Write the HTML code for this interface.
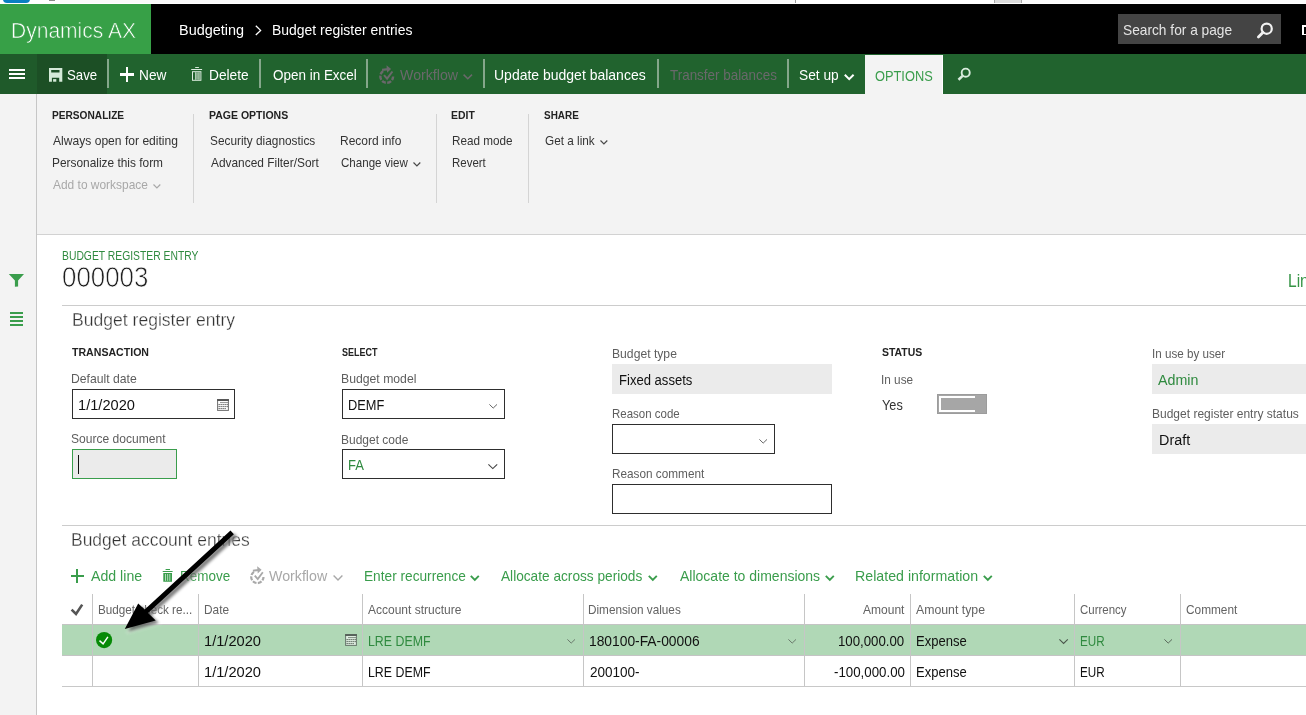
<!DOCTYPE html>
<html><head><meta charset="utf-8"><title>Budget register entries</title>
<style>
html,body{margin:0;padding:0;}
body{width:1306px;height:715px;overflow:hidden;position:relative;background:#fff;font-family:"Liberation Sans", sans-serif;}
.t{position:absolute;white-space:nowrap;line-height:1;transform-origin:0 0;font-family:"Liberation Sans", sans-serif;}
.b{position:absolute;box-sizing:border-box;}
svg{position:absolute;overflow:visible;}
#root{position:absolute;left:0;top:0;width:1306px;height:715px;overflow:hidden;background:#fff;}
</style></head><body>
<div id="root">
<!-- top browser strip -->
<div class="b" style="left:0;top:0;width:1306px;height:4px;background:#fff"></div>
<div class="b" style="left:60px;top:0;width:735px;height:3px;background:#fafafa"></div>
<div class="b" style="left:1022px;top:0;width:284px;height:3px;background:#fbfbfb"></div>
<div class="b" style="left:795px;top:0;width:1px;height:3px;background:#9a9a9a"></div>
<div class="b" style="left:994px;top:0;width:28px;height:3px;background:#dcdcdc;border-left:1px solid #a8a8a8;border-right:1px solid #a8a8a8"></div>
<div class="b" style="left:3.4px;top:-11px;width:27px;height:14px;background:#0a7fc2;border-radius:4px"></div>
<div class="b" style="left:48.5px;top:0;width:6.7px;height:0.9px;background:#8c8c8c"></div>
<!-- header -->
<div class="b" style="left:0;top:4px;width:1306px;height:50px;background:#000"></div>
<div class="b" style="left:0;top:4px;width:151px;height:50px;background:#37a047"></div>
<svg style="left:255px;top:25px" width="7" height="11" viewBox="0 0 7 11"><path d="M0.8 0.8 L5.6 5.4 L0.8 10" fill="none" stroke="#fff" stroke-width="1.3"/></svg>
<div class="b" style="left:1118px;top:14px;width:163px;height:30px;background:#444444"></div>
<svg style="left:1257px;top:22px" width="17" height="17" viewBox="0 0 17 17"><circle cx="9.7" cy="6.7" r="5.1" fill="none" stroke="#f2f2f2" stroke-width="2.2"/><path d="M5.9 10.5 L1.4 15" stroke="#f2f2f2" stroke-width="2.8" stroke-linecap="round"/></svg>
<div class="b" style="left:1302px;top:25.4px;width:1.6px;height:9.6px;background:#fff"></div>
<div class="b" style="left:1302px;top:25.4px;width:4px;height:1.3px;background:#fff"></div>
<div class="b" style="left:1302px;top:33.7px;width:4px;height:1.3px;background:#fff"></div>
<!-- toolbar -->
<div class="b" style="left:0;top:54px;width:1306px;height:40px;background:#21632e"></div>
<div class="b" style="left:0;top:54px;width:37px;height:40px;background:#1f5a2a"></div>
<div class="b" style="left:37px;top:54px;width:70px;height:40px;background:#1c4f25"></div>
<!-- hamburger -->
<div class="b" style="left:9px;top:69px;width:16px;height:1.9px;background:#fff"></div>
<div class="b" style="left:9px;top:73.1px;width:16px;height:1.9px;background:#fff"></div>
<div class="b" style="left:9px;top:77.2px;width:16px;height:1.9px;background:#fff"></div>
<!-- save icon -->
<svg style="left:48.8px;top:68.1px" width="14" height="14" viewBox="0 0 14 14"><path d="M0 0 H13.3 V13.7 H10.2 V9.8 H2.9 V13.7 H0 Z M2.2 2.1 V4.6 H10.5 V2.1 Z" fill="#d5ead9" fill-rule="evenodd"/><rect x="4.1" y="11.1" width="3.2" height="2.6" fill="#d5ead9"/></svg>
<!-- toolbar separators -->
<div class="b" style="left:107.3px;top:59px;width:2px;height:29.4px;background:#85a78b"></div>
<div class="b" style="left:259.4px;top:59px;width:2px;height:29.4px;background:#85a78b"></div>
<div class="b" style="left:366.4px;top:59px;width:2px;height:29.4px;background:#85a78b"></div>
<div class="b" style="left:482.6px;top:59px;width:2px;height:29.4px;background:#85a78b"></div>
<div class="b" style="left:656.7px;top:59px;width:2px;height:29.4px;background:#85a78b"></div>
<div class="b" style="left:787.0px;top:59px;width:2px;height:29.4px;background:#85a78b"></div>
<!-- plus (New) -->
<div class="b" style="left:120px;top:73.4px;width:14.4px;height:2.6px;background:#fff"></div>
<div class="b" style="left:125.9px;top:67.4px;width:2.6px;height:14.6px;background:#fff"></div>
<!-- trash (Delete) -->
<svg style="left:191px;top:66px" width="12" height="16" viewBox="0 0 12 16"><rect x="4" y="1" width="4.1" height="1" rx="0.4" fill="#d6e8d9"/><rect x="0.2" y="3" width="10.9" height="1" fill="#dcebdf"/><rect x="1.5" y="5.7" width="8.4" height="8.6" fill="none" stroke="#dcebdf" stroke-width="1"/><rect x="4" y="6.2" width="4.6" height="7.6" fill="#86ae8d"/><path d="M4.5 6.2 V13.8 M8.1 6.2 V13.8" stroke="#b4d0b9" stroke-width="0.8"/></svg>
<!-- workflow icon (toolbar) -->
<svg style="left:378px;top:65px" width="17" height="20" viewBox="0 0 17 20"><g fill="none" stroke="#6a686b"><path d="M5.12 6.09 A6.4 6.4 0 1 0 15.1 11.4" stroke-width="2.4" stroke-dasharray="4.2 1.35"/><path d="M6 10.1 L9.1 13.7 L14.4 6.5" stroke-width="2"/><path d="M4.1 4.9 L10.5 4.1" stroke-width="2.2"/></g><path d="M8.5 0.2 L13.1 4 L9.1 7.8 Z" fill="#6a686b"/></svg>
<svg style="left:463px;top:73.5px" width="10" height="6" viewBox="0 0 10 6"><path d="M0.6 0.6 L4.8 4.8 L9 0.6" fill="none" stroke="#6a686b" stroke-width="1.5"/></svg>
<svg style="left:843.5px;top:73.5px" width="11" height="7" viewBox="0 0 11 7"><path d="M0.8 0.8 L5.2 5.2 L9.6 0.8" fill="none" stroke="#fff" stroke-width="2"/></svg>
<!-- options tab -->
<div class="b" style="left:865px;top:55px;width:78px;height:40px;background:#f3f3f3"></div>
<div class="b" style="left:942px;top:55px;width:1.2px;height:39px;background:#fff"></div>
<svg style="left:957px;top:67px" width="15" height="15" viewBox="0 0 15 15"><circle cx="8.7" cy="5.7" r="4.05" fill="none" stroke="#d8ebdc" stroke-width="1.9"/><path d="M5.6 8.9 L1.5 12.8" stroke="#d8ebdc" stroke-width="2.6"/></svg>
<!-- options pane + sidebar -->
<div class="b" style="left:0;top:94px;width:1306px;height:140px;background:#f3f3f3"></div>
<div class="b" style="left:0;top:94px;width:37px;height:621px;background:#f3f3f3"></div>
<div class="b" style="left:36px;top:94px;width:1px;height:621px;background:#c6c6c6"></div>
<div class="b" style="left:37px;top:234px;width:1269px;height:1px;background:#d2d2d2"></div>
<div class="b" style="left:193px;top:114px;width:1.4px;height:89px;background:#d4d4d4"></div>
<div class="b" style="left:435.5px;top:114px;width:1.4px;height:89px;background:#d4d4d4"></div>
<div class="b" style="left:527.8px;top:114px;width:1.4px;height:89px;background:#d4d4d4"></div>
<svg style="left:153.3px;top:183.5px" width="8" height="5" viewBox="0 0 8 5"><path d="M0.5 0.5 L3.9 4 L7.3 0.5" fill="none" stroke="#a8a8a8" stroke-width="1.15"/></svg>
<svg style="left:413.3px;top:161.5px" width="8" height="5" viewBox="0 0 8 5"><path d="M0.5 0.5 L3.9 4 L7.3 0.5" fill="none" stroke="#484848" stroke-width="1.15"/></svg>
<svg style="left:599.8px;top:139.7px" width="8" height="5" viewBox="0 0 8 5"><path d="M0.5 0.5 L3.9 4 L7.3 0.5" fill="none" stroke="#484848" stroke-width="1.15"/></svg>
<!-- sidebar icons -->
<svg style="left:0px;top:0px" width="40" height="340" viewBox="0 0 40 340"><path d="M8.8 274 H24 L18.1 280.4 V286.4 L14.9 286.8 V280.4 Z" fill="#3a9d4c"/></svg>
<div class="b" style="left:10px;top:312.3px;width:13px;height:1.9px;background:#3a9d4c"></div>
<div class="b" style="left:10px;top:316.3px;width:13px;height:1.9px;background:#3a9d4c"></div>
<div class="b" style="left:10px;top:320.2px;width:13px;height:1.9px;background:#3a9d4c"></div>
<div class="b" style="left:10px;top:324.1px;width:13px;height:1.9px;background:#3a9d4c"></div>
<!-- rules -->
<div class="b" style="left:62px;top:305px;width:1244px;height:1px;background:#cccccc"></div>
<div class="b" style="left:62px;top:524.5px;width:1244px;height:1px;background:#cccccc"></div>
<!-- form inputs -->
<div class="b" style="left:72px;top:389px;width:163px;height:30px;border:1px solid #2e2e2e;background:#fff"></div>
<svg style="left:217px;top:399px" width="13" height="13" viewBox="0 0 13 13"><rect x="0.6" y="0.6" width="10.8" height="10.8" fill="#fff" stroke="#6e6e6e" stroke-width="1"/><rect x="0.1" y="0.1" width="11.8" height="1.9" fill="#555"/><path d="M3.2 3.6 H11 M1.4 5.6 H11 M1.4 7.6 H11 M1.4 9.6 H9" stroke="#666" stroke-width="0.9" stroke-dasharray="1.6 0.4"/></svg>
<div class="b" style="left:72px;top:449px;width:105px;height:30px;border:1px solid #3a9d4c;background:#ebebeb"></div>
<div class="b" style="left:78px;top:455px;width:1px;height:19px;background:#111"></div>
<div class="b" style="left:342px;top:389px;width:163px;height:30px;border:1px solid #2e2e2e;background:#fff"></div>
<svg style="left:488.6px;top:404px" width="9" height="5" viewBox="0 0 9 5"><path d="M0.4 0.4 L4.2 4.1 L8 0.4" fill="none" stroke="#666" stroke-width="1"/></svg>
<div class="b" style="left:342px;top:449px;width:163px;height:30px;border:1px solid #2e2e2e;background:#fff"></div>
<svg style="left:488px;top:464.4px" width="10" height="6" viewBox="0 0 10 6"><path d="M0.4 0.4 L4.8 4.6 L9.2 0.4" fill="none" stroke="#444" stroke-width="1.1"/></svg>
<div class="b" style="left:612px;top:364px;width:220px;height:29.6px;background:#ebebeb"></div>
<div class="b" style="left:612px;top:424px;width:163px;height:30px;border:1px solid #2e2e2e;background:#fff"></div>
<svg style="left:759px;top:439px" width="9" height="5" viewBox="0 0 9 5"><path d="M0.4 0.4 L4.2 4.1 L8 0.4" fill="none" stroke="#666" stroke-width="1"/></svg>
<div class="b" style="left:612px;top:484px;width:220px;height:30px;border:1px solid #2e2e2e;background:#fff"></div>
<!-- toggle -->
<div class="b" style="left:937px;top:394px;width:50px;height:20px;background:#a6a6a6;border:1px solid #9c9c9c"></div>
<div class="b" style="left:939px;top:396px;width:36px;height:16px;border:2px solid #fff;border-right:none"></div>
<div class="b" style="left:1152px;top:364px;width:154px;height:29.6px;background:#ebebeb"></div>
<div class="b" style="left:1152px;top:424.2px;width:154px;height:29.6px;background:#ebebeb"></div>
<!-- action bar icons -->
<div class="b" style="left:70.5px;top:575px;width:13.4px;height:2px;background:#3a9d4c"></div>
<div class="b" style="left:76.2px;top:569.3px;width:2px;height:13.4px;background:#3a9d4c"></div>
<svg style="left:163.2px;top:569px" width="10" height="14" viewBox="0 0 10 14"><path d="M2.6 0 H7 V1 H2.6 Z M-0.3 1.9 H9.6 V3.1 H-0.3 Z M0.3 3.9 H9 V12.8 H0.3 Z" fill="#3a9d4c"/><path d="M2.5 5 V11.8 M4.65 5 V11.8 M6.8 5 V11.8" stroke="#bfe3c5" stroke-width="0.9"/></svg>
<svg style="left:249px;top:566.4px" width="17" height="20" viewBox="0 0 17 20"><g transform="scale(0.96)"><g fill="none" stroke="#a9a9a9"><path d="M5.12 6.09 A6.4 6.4 0 1 0 15.1 11.4" stroke-width="2.3" stroke-dasharray="4.2 1.35"/><path d="M6 10.1 L9.1 13.7 L14.4 6.5" stroke-width="1.9"/><path d="M4.1 4.9 L10.5 4.1" stroke-width="2.1"/></g><path d="M8.5 0.2 L13.1 4 L9.1 7.8 Z" fill="#a9a9a9"/></g></svg>
<svg style="left:332.6px;top:574.5px" width="11" height="6" viewBox="0 0 11 6"><path d="M0.6 0.6 L5 5 L9.4 0.6" fill="none" stroke="#a8a8a8" stroke-width="1.4"/></svg>
<svg style="left:470.2px;top:574.6px" width="11" height="7" viewBox="0 0 11 7"><path d="M0.8 0.8 L4.8 4.8 L8.8 0.8" fill="none" stroke="#3a9d4c" stroke-width="1.9"/></svg>
<svg style="left:648.2px;top:574.6px" width="11" height="7" viewBox="0 0 11 7"><path d="M0.8 0.8 L4.8 4.8 L8.8 0.8" fill="none" stroke="#3a9d4c" stroke-width="1.9"/></svg>
<svg style="left:825px;top:574.6px" width="11" height="7" viewBox="0 0 11 7"><path d="M0.8 0.8 L4.8 4.8 L8.8 0.8" fill="none" stroke="#3a9d4c" stroke-width="1.9"/></svg>
<svg style="left:983px;top:574.6px" width="11" height="7" viewBox="0 0 11 7"><path d="M0.8 0.8 L4.8 4.8 L8.8 0.8" fill="none" stroke="#3a9d4c" stroke-width="1.9"/></svg>
<!-- grid -->
<div class="b" style="left:62px;top:624px;width:1244px;height:32px;background:#b0d8b6;border-top:1px solid #c4c4c4;border-bottom:1px solid #c4c4c4"></div>
<div class="b" style="left:62px;top:686px;width:1244px;height:1px;background:#c8c8c8"></div>
<div class="b" style="left:92px;top:594px;width:1.2px;height:92px;background:#c6c6c6"></div>
<div class="b" style="left:198px;top:594px;width:1.2px;height:92px;background:#c6c6c6"></div>
<div class="b" style="left:362px;top:594px;width:1.2px;height:92px;background:#c6c6c6"></div>
<div class="b" style="left:583px;top:594px;width:1.2px;height:92px;background:#c6c6c6"></div>
<div class="b" style="left:804px;top:594px;width:1.2px;height:92px;background:#c6c6c6"></div>
<div class="b" style="left:910px;top:594px;width:1.2px;height:92px;background:#c6c6c6"></div>
<div class="b" style="left:1074px;top:594px;width:1.2px;height:92px;background:#c6c6c6"></div>
<div class="b" style="left:1180px;top:594px;width:1.2px;height:92px;background:#c6c6c6"></div>
<svg style="left:70px;top:603px" width="14" height="13" viewBox="0 0 14 13"><path d="M1.6 6.6 L6 11 L12.2 1.6" fill="none" stroke="#555" stroke-width="2.6"/></svg>
<svg style="left:96px;top:631.8px" width="17" height="17" viewBox="0 0 17 17"><circle cx="8.1" cy="8.1" r="8.1" fill="#078a07"/><path d="M3.5 8.6 L7.1 11.9 L11.9 4.8" fill="none" stroke="#fff" stroke-width="1.45"/></svg>
<svg style="left:345.4px;top:634px" width="13" height="13" viewBox="0 0 13 13"><rect x="0.6" y="0.6" width="10.8" height="10.8" fill="#dfeee1" stroke="#66756a" stroke-width="1"/><rect x="0.1" y="0.1" width="11.8" height="1.9" fill="#56625a"/><path d="M3.2 3.6 H11 M1.4 5.6 H11 M1.4 7.6 H11 M1.4 9.6 H9" stroke="#5e6b60" stroke-width="0.9" stroke-dasharray="1.6 0.4"/></svg>
<svg style="left:566.6px;top:639.3px" width="9" height="5" viewBox="0 0 9 5"><path d="M0.4 0.4 L4.2 4.1 L8 0.4" fill="none" stroke="#6a7a6c" stroke-width="1"/></svg>
<svg style="left:787.6px;top:639.3px" width="9" height="5" viewBox="0 0 9 5"><path d="M0.4 0.4 L4.2 4.1 L8 0.4" fill="none" stroke="#6a7a6c" stroke-width="1"/></svg>
<svg style="left:1058.5px;top:639.3px" width="10" height="6" viewBox="0 0 10 6"><path d="M0.4 0.4 L4.6 4.4 L8.8 0.4" fill="none" stroke="#4a554b" stroke-width="1.1"/></svg>
<svg style="left:1163.7px;top:639.3px" width="9" height="5" viewBox="0 0 9 5"><path d="M0.4 0.4 L4.2 4.1 L8 0.4" fill="none" stroke="#5a6a5c" stroke-width="1"/></svg>

<span class="t" style="left:11.21px;top:20.00px;font-size:22.2px;color:#ffffff;transform:scaleX(0.9473);-webkit-text-stroke:0.55px #37a047;">Dynamics AX</span>
<span class="t" style="left:178.91px;top:23.00px;font-size:14.6px;color:#ffffff;transform:scaleX(0.9891);">Budgeting</span>
<span class="t" style="left:272.04px;top:23.00px;font-size:14.6px;color:#ffffff;transform:scaleX(0.9562);">Budget register entries</span>
<span class="t" style="left:1123.15px;top:23.00px;font-size:14.4px;color:#e4e4e4;transform:scaleX(0.954);">Search for a page</span>
<span class="t" style="left:67.39px;top:68.00px;font-size:14.6px;color:#ffffff;transform:scaleX(0.9062);">Save</span>
<span class="t" style="left:139.36px;top:68.00px;font-size:14.6px;color:#ffffff;transform:scaleX(0.9379);">New</span>
<span class="t" style="left:209.46px;top:68.00px;font-size:14.6px;color:#ffffff;transform:scaleX(0.9415);">Delete</span>
<span class="t" style="left:272.60px;top:68.00px;font-size:14.6px;color:#ffffff;transform:scaleX(0.9222);">Open in Excel</span>
<span class="t" style="left:399.60px;top:68.00px;font-size:14.6px;color:#6a686b;transform:scaleX(0.9717);">Workflow</span>
<span class="t" style="left:494.44px;top:68.00px;font-size:14.6px;color:#ffffff;transform:scaleX(0.9586);">Update budget balances</span>
<span class="t" style="left:669.50px;top:68.00px;font-size:14.6px;color:#6a686b;transform:scaleX(0.9198);">Transfer balances</span>
<span class="t" style="left:798.76px;top:68.00px;font-size:14.6px;color:#ffffff;transform:scaleX(0.9415);">Set up</span>
<span class="t" style="left:875.00px;top:69.00px;font-size:14.6px;color:#3a9d4c;transform:scaleX(0.8785);">OPTIONS</span>
<span class="t" style="left:51.81px;top:110.00px;font-size:11.4px;color:#222222;font-weight:700;transform:scaleX(0.89);">PERSONALIZE</span>
<span class="t" style="left:53.30px;top:135.00px;font-size:12.6px;color:#333333;transform:scaleX(0.96);">Always open for editing</span>
<span class="t" style="left:52.36px;top:157.00px;font-size:12.6px;color:#333333;transform:scaleX(0.944);">Personalize this form</span>
<span class="t" style="left:53.30px;top:179.00px;font-size:12.6px;color:#a8a8a8;transform:scaleX(0.948);">Add to workspace</span>
<span class="t" style="left:208.98px;top:110.00px;font-size:11.4px;color:#222222;font-weight:700;transform:scaleX(0.9224);">PAGE OPTIONS</span>
<span class="t" style="left:209.66px;top:135.00px;font-size:12.6px;color:#333333;transform:scaleX(0.9396);">Security diagnostics</span>
<span class="t" style="left:210.60px;top:157.00px;font-size:12.6px;color:#333333;transform:scaleX(0.9447);">Advanced Filter/Sort</span>
<span class="t" style="left:340.15px;top:135.00px;font-size:12.6px;color:#333333;transform:scaleX(0.9524);">Record info</span>
<span class="t" style="left:340.70px;top:157.00px;font-size:12.6px;color:#333333;transform:scaleX(0.9178);">Change view</span>
<span class="t" style="left:450.98px;top:110.00px;font-size:11.4px;color:#222222;font-weight:700;transform:scaleX(0.916);">EDIT</span>
<span class="t" style="left:452.37px;top:135.00px;font-size:12.6px;color:#333333;transform:scaleX(0.9297);">Read mode</span>
<span class="t" style="left:452.39px;top:157.00px;font-size:12.6px;color:#333333;transform:scaleX(0.9111);">Revert</span>
<span class="t" style="left:544.30px;top:110.00px;font-size:11.4px;color:#222222;font-weight:700;transform:scaleX(0.8725);">SHARE</span>
<span class="t" style="left:545.40px;top:135.00px;font-size:12.6px;color:#333333;transform:scaleX(0.934);">Get a link</span>
<span class="t" style="left:61.75px;top:250.00px;font-size:12.2px;color:#2f8a3f;transform:scaleX(0.8491);">BUDGET REGISTER ENTRY</span>
<span class="t" style="left:61.71px;top:263.00px;font-size:29px;color:#1e1e1e;transform:scaleX(0.8915);-webkit-text-stroke:0.75px #fff;">000003</span>
<span class="t" style="left:1288.25px;top:272.00px;font-size:18.2px;color:#359445;transform:scaleX(0.8548);">Lines</span>
<span class="t" style="left:71.60px;top:312.00px;font-size:17.6px;color:#333333;transform:scaleX(0.9981);-webkit-text-stroke:0.3px #fff;">Budget register entry</span>
<span class="t" style="left:72.20px;top:347.00px;font-size:11.4px;color:#222222;font-weight:700;transform:scaleX(0.9289);">TRANSACTION</span>
<span class="t" style="left:71.17px;top:374.00px;font-size:11.9px;color:#5e5e5e;transform:scaleX(1.0254);">Default date</span>
<span class="t" style="left:77.84px;top:399.00px;font-size:13.8px;color:#111111;transform:scaleX(1.0596);">1/1/2020</span>
<span class="t" style="left:71.19px;top:434.00px;font-size:11.9px;color:#5e5e5e;transform:scaleX(1.0141);">Source document</span>
<span class="t" style="left:342.20px;top:347.00px;font-size:11.4px;color:#222222;font-weight:700;transform:scaleX(0.7889);">SELECT</span>
<span class="t" style="left:341.17px;top:374.00px;font-size:11.9px;color:#5e5e5e;transform:scaleX(1.0278);">Budget model</span>
<span class="t" style="left:347.77px;top:399.00px;font-size:13.8px;color:#111111;transform:scaleX(0.9289);">DEMF</span>
<span class="t" style="left:341.19px;top:435.00px;font-size:11.9px;color:#5e5e5e;transform:scaleX(1.0091);">Budget code</span>
<span class="t" style="left:347.76px;top:459.00px;font-size:13.8px;color:#2f8a3f;transform:scaleX(0.9438);">FA</span>
<span class="t" style="left:611.58px;top:349.00px;font-size:11.9px;color:#5e5e5e;transform:scaleX(1.0226);">Budget type</span>
<span class="t" style="left:618.65px;top:374.00px;font-size:13.8px;color:#111111;transform:scaleX(0.9474);">Fixed assets</span>
<span class="t" style="left:611.63px;top:409.00px;font-size:11.9px;color:#5e5e5e;transform:scaleX(0.9667);">Reason code</span>
<span class="t" style="left:611.61px;top:469.00px;font-size:11.9px;color:#5e5e5e;transform:scaleX(0.9902);">Reason comment</span>
<span class="t" style="left:882.40px;top:347.00px;font-size:11.4px;color:#222222;font-weight:700;transform:scaleX(0.9182);">STATUS</span>
<span class="t" style="left:881.41px;top:375.00px;font-size:11.9px;color:#5e5e5e;transform:scaleX(0.9903);">In use</span>
<span class="t" style="left:882.40px;top:399.00px;font-size:13.8px;color:#333333;transform:scaleX(0.9227);">Yes</span>
<span class="t" style="left:1151.62px;top:349.00px;font-size:11.9px;color:#5e5e5e;transform:scaleX(0.9797);">In use by user</span>
<span class="t" style="left:1158.10px;top:374.00px;font-size:13.8px;color:#2f8a3f;transform:scaleX(1.0333);">Admin</span>
<span class="t" style="left:1151.59px;top:409.00px;font-size:11.9px;color:#5e5e5e;transform:scaleX(1.0097);">Budget register entry status</span>
<span class="t" style="left:1158.56px;top:434.00px;font-size:13.8px;color:#111111;transform:scaleX(1.0414);">Draft</span>
<span class="t" style="left:71.31px;top:532.00px;font-size:17.6px;color:#333333;transform:scaleX(0.9927);-webkit-text-stroke:0.3px #fff;">Budget account entries</span>
<span class="t" style="left:90.50px;top:569.00px;font-size:14.6px;color:#3a9d4c;transform:scaleX(0.9692);">Add line</span>
<span class="t" style="left:180.18px;top:569.00px;font-size:14.6px;color:#3a9d4c;transform:scaleX(0.9226);">Remove</span>
<span class="t" style="left:269.30px;top:569.00px;font-size:14.6px;color:#a8a8a8;transform:scaleX(0.9733);">Workflow</span>
<span class="t" style="left:363.76px;top:569.00px;font-size:14.6px;color:#3a9d4c;transform:scaleX(0.9374);">Enter recurrence</span>
<span class="t" style="left:501.40px;top:569.00px;font-size:14.6px;color:#3a9d4c;transform:scaleX(0.9364);">Allocate across periods</span>
<span class="t" style="left:679.60px;top:569.00px;font-size:14.6px;color:#3a9d4c;transform:scaleX(0.9596);">Allocate to dimensions</span>
<span class="t" style="left:855.13px;top:569.00px;font-size:14.6px;color:#3a9d4c;transform:scaleX(0.9728);">Related information</span>
<span class="t" style="left:97.56px;top:604.00px;font-size:12.4px;color:#636363;transform:scaleX(0.9439);">Budget check re...</span>
<span class="t" style="left:203.74px;top:604.00px;font-size:12.4px;color:#636363;transform:scaleX(0.956);">Date</span>
<span class="t" style="left:368.30px;top:604.00px;font-size:12.4px;color:#636363;transform:scaleX(0.9688);">Account structure</span>
<span class="t" style="left:588.35px;top:604.00px;font-size:12.4px;color:#636363;transform:scaleX(0.9485);">Dimension values</span>
<span class="t" style="left:862.60px;top:604.00px;font-size:12.4px;color:#636363;transform:scaleX(0.9698);">Amount</span>
<span class="t" style="left:916.20px;top:604.00px;font-size:12.4px;color:#636363;transform:scaleX(0.9913);">Amount type</span>
<span class="t" style="left:1080.30px;top:604.00px;font-size:12.4px;color:#636363;transform:scaleX(0.926);">Currency</span>
<span class="t" style="left:1186.00px;top:604.00px;font-size:12.4px;color:#636363;transform:scaleX(0.9556);">Comment</span>
<span class="t" style="left:203.64px;top:635.00px;font-size:13.8px;color:#111111;transform:scaleX(1.0615);">1/1/2020</span>
<span class="t" style="left:368.10px;top:635.00px;font-size:13.8px;color:#2f8a3f;transform:scaleX(0.8956);">LRE DEMF</span>
<span class="t" style="left:588.80px;top:635.00px;font-size:13.8px;color:#111111;transform:scaleX(1.0009);">180100-FA-00006</span>
<span class="t" style="left:838.14px;top:635.00px;font-size:13.8px;color:#111111;transform:scaleX(0.9588);">100,000.00</span>
<span class="t" style="left:915.56px;top:635.00px;font-size:13.8px;color:#111111;transform:scaleX(0.9442);">Expense</span>
<span class="t" style="left:1080.05px;top:635.00px;font-size:13.8px;color:#2f8a3f;transform:scaleX(0.8464);">EUR</span>
<span class="t" style="left:203.64px;top:666.00px;font-size:13.8px;color:#111111;transform:scaleX(1.0615);">1/1/2020</span>
<span class="t" style="left:368.10px;top:666.00px;font-size:13.8px;color:#111111;transform:scaleX(0.8956);">LRE DEMF</span>
<span class="t" style="left:589.80px;top:666.00px;font-size:13.8px;color:#111111;transform:scaleX(0.98);">200100-</span>
<span class="t" style="left:834.00px;top:666.00px;font-size:13.8px;color:#111111;transform:scaleX(0.963);">-100,000.00</span>
<span class="t" style="left:915.56px;top:666.00px;font-size:13.8px;color:#111111;transform:scaleX(0.9442);">Expense</span>
<span class="t" style="left:1080.05px;top:666.00px;font-size:13.8px;color:#111111;transform:scaleX(0.8464);">EUR</span>
<!-- arrow annotation -->
<svg style="left:0;top:0" width="1306" height="715" viewBox="0 0 1306 715">
<defs><filter id="sh" x="-20%" y="-20%" width="140%" height="140%"><feGaussianBlur stdDeviation="1.5"/></filter></defs>
<g transform="translate(3.4,2.8)" opacity="0.55" filter="url(#sh)"><path d="M230.5 530.6 L233.9 534.3 L148.1 613 L155.7 620.4 L124.8 629.1 L138.2 603.4 L144.7 609.4 Z" fill="#fff" stroke="#fff" stroke-width="2"/></g>
<g transform="translate(3.2,2.6)" opacity="0.5" filter="url(#sh)"><path d="M230.5 530.6 L233.9 534.3 L148.1 613 L155.7 620.4 L124.8 629.1 L138.2 603.4 L144.7 609.4 Z" fill="#000"/></g>
<path d="M230.5 530.6 L233.9 534.3 L148.1 613 L155.7 620.4 L124.8 629.1 L138.2 603.4 L144.7 609.4 Z" fill="#000"/>
</svg>

</div>
</body></html>
